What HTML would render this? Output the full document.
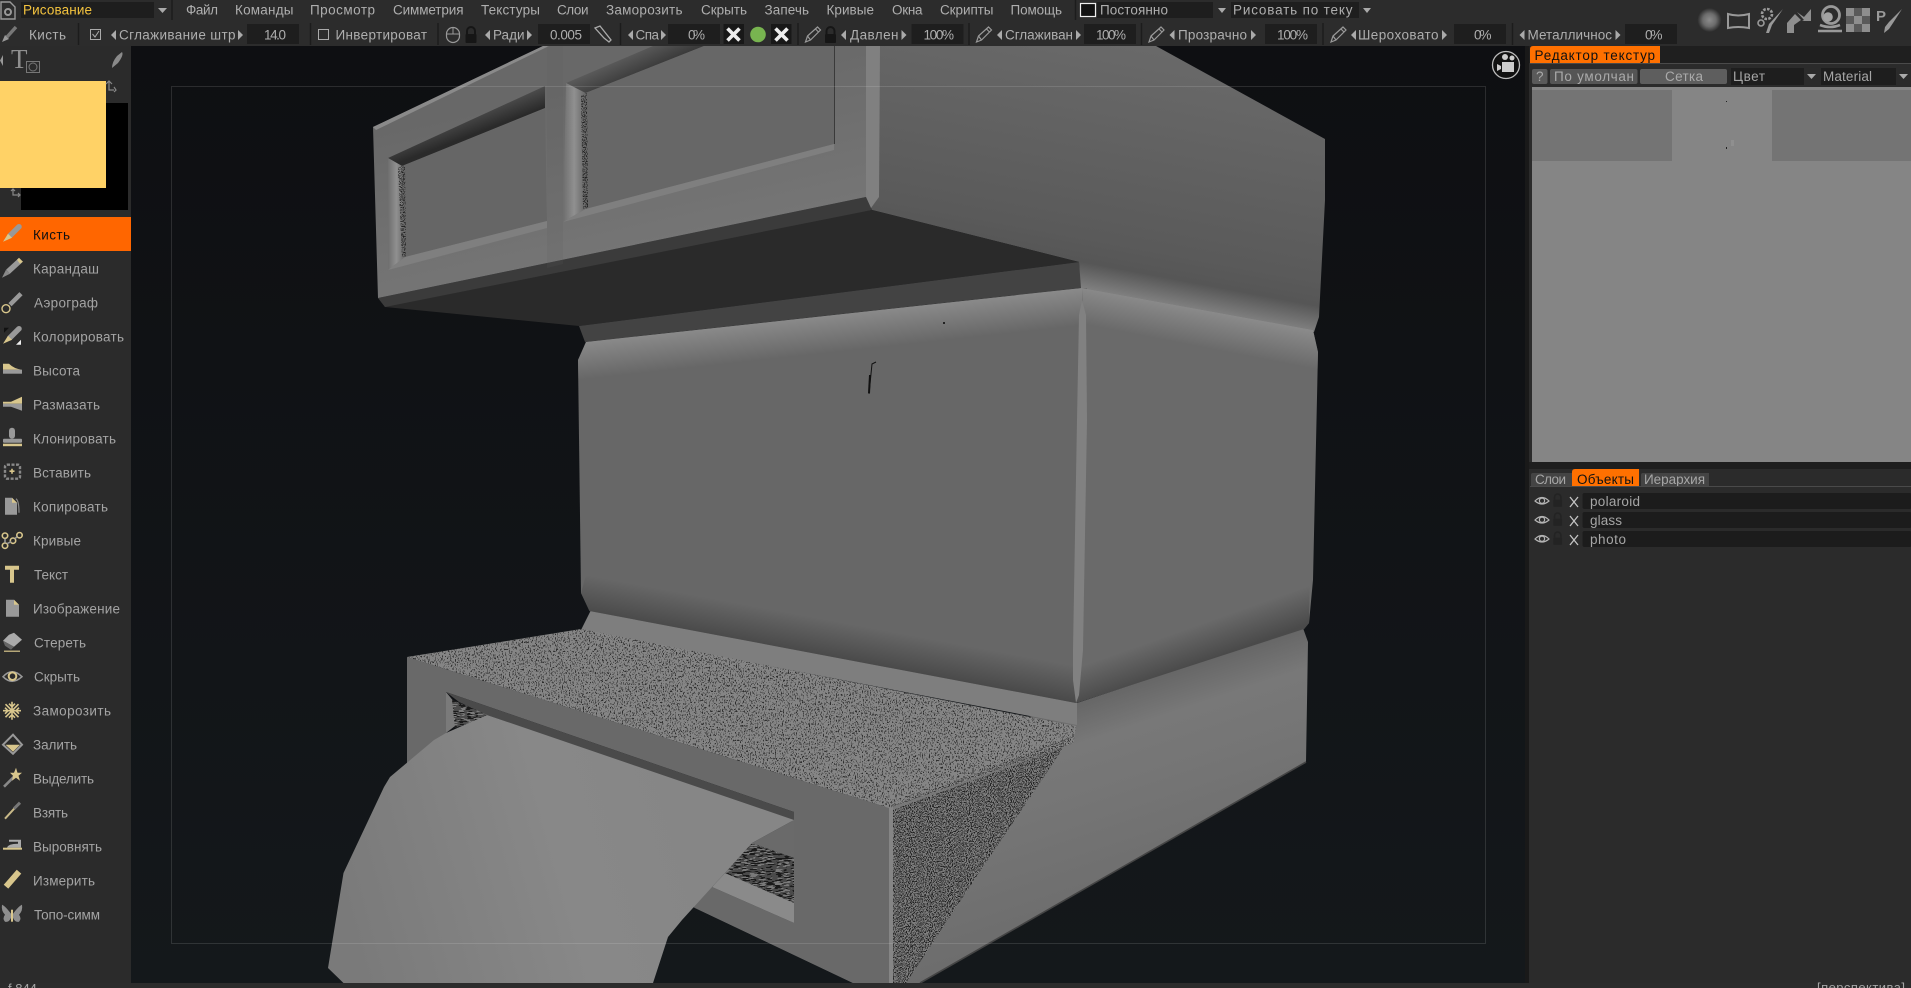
<!DOCTYPE html>
<html><head><meta charset="utf-8"><style>
html,body{margin:0;padding:0;background:#2c2c2c;overflow:hidden}
svg{display:block}
text{font-family:"Liberation Sans",sans-serif;font-size:13.5px;fill:#a6a6a6}
.m{fill:#aeaeae}
.s{fill:#a4a4a4;font-size:13.5px}
.f{fill:#1e1e1e}
.sep{stroke:#1c1c1c;stroke-width:1.5}
</style></head><body>
<svg width="1911" height="988" viewBox="0 0 1911 988" xmlns="http://www.w3.org/2000/svg">
<defs>
<linearGradient id="vp" x1="0" y1="0" x2="0" y2="1"><stop offset="0" stop-color="#0e0f12"/><stop offset="1" stop-color="#14181b"/></linearGradient>
<linearGradient id="rf" gradientUnits="userSpaceOnUse" x1="1245" y1="54" x2="1197" y2="310"><stop offset="0" stop-color="#6a6a6a"/><stop offset=".8" stop-color="#5a5a5a"/><stop offset=".9" stop-color="#565656"/><stop offset="1" stop-color="#808080"/></linearGradient>
<linearGradient id="lf" gradientUnits="userSpaceOnUse" x1="600" y1="80" x2="640" y2="260"><stop offset="0" stop-color="#686868"/><stop offset="1" stop-color="#767676"/></linearGradient>
<linearGradient id="bev" gradientUnits="userSpaceOnUse" x1="458" y1="92" x2="474" y2="134"><stop offset="0" stop-color="#6a6a6a"/><stop offset=".45" stop-color="#555"/><stop offset="1" stop-color="#2a2a2a"/></linearGradient>
<linearGradient id="bev2" gradientUnits="userSpaceOnUse" x1="625" y1="52" x2="640" y2="85"><stop offset="0" stop-color="#606060"/><stop offset="1" stop-color="#2c2c2c"/></linearGradient>
<linearGradient id="mt" gradientUnits="userSpaceOnUse" x1="832" y1="315" x2="836" y2="352"><stop offset="0" stop-color="#8a8a8a"/><stop offset="1" stop-color="#8a8a8a" stop-opacity="0"/></linearGradient>
<linearGradient id="mb" gradientUnits="userSpaceOnUse" x1="832" y1="657" x2="838.5" y2="622"><stop offset="0" stop-color="#4a4a4a"/><stop offset="1" stop-color="#4a4a4a" stop-opacity="0"/></linearGradient>
<linearGradient id="rt" gradientUnits="userSpaceOnUse" x1="1197" y1="309" x2="1190" y2="345"><stop offset="0" stop-color="#8a8a8a"/><stop offset="1" stop-color="#8a8a8a" stop-opacity="0"/></linearGradient>
<linearGradient id="rb" gradientUnits="userSpaceOnUse" x1="1190" y1="666" x2="1178" y2="632"><stop offset="0" stop-color="#4a4a4a"/><stop offset="1" stop-color="#4a4a4a" stop-opacity="0"/></linearGradient>
<linearGradient id="lb" gradientUnits="userSpaceOnUse" x1="1190" y1="665" x2="1269" y2="902"><stop offset="0" stop-color="#666"/><stop offset=".16" stop-color="#787878"/><stop offset=".38" stop-color="#757575"/><stop offset="1" stop-color="#6a6a6a"/></linearGradient>
<linearGradient id="pp" gradientUnits="userSpaceOnUse" x1="340" y1="900" x2="700" y2="800"><stop offset="0" stop-color="#7a7a7a"/><stop offset=".6" stop-color="#888"/><stop offset="1" stop-color="#868686"/></linearGradient>
<linearGradient id="fl" x1="0" y1="0" x2="1" y2="0"><stop offset="0" stop-color="#6e6e6e"/><stop offset=".5" stop-color="#909090"/><stop offset="1" stop-color="#666"/></linearGradient>
<radialGradient id="ball"><stop offset="0" stop-color="#8c8c8c"/><stop offset=".55" stop-color="#6c6c6c"/><stop offset="1" stop-color="#2c2c2c"/></radialGradient>
<filter id="n1" x="0" y="0" width="1" height="1" color-interpolation-filters="sRGB"><feTurbulence type="fractalNoise" baseFrequency="0.85 0.55" numOctaves="2" seed="4"/><feColorMatrix values="0 0 0 0 .18 0 0 0 0 .18 0 0 0 0 .18 22 0 0 0 -12.9"/><feComposite in2="SourceAlpha" operator="in"/></filter>
<filter id="n2" x="0" y="0" width="1" height="1" color-interpolation-filters="sRGB"><feTurbulence type="fractalNoise" baseFrequency="0.95 0.8" numOctaves="2" seed="9"/><feColorMatrix values="0 0 0 0 .13 0 0 0 0 .13 0 0 0 0 .13 22 0 0 0 -11.4"/><feComposite in2="SourceAlpha" operator="in"/></filter>
<filter id="n3" x="0" y="0" width="1" height="1" color-interpolation-filters="sRGB"><feTurbulence type="fractalNoise" baseFrequency="0.12 1" numOctaves="2" seed="2"/><feColorMatrix values="0 0 0 0 .1 0 0 0 0 .1 0 0 0 0 .1 22 0 0 0 -10.4"/><feComposite in2="SourceAlpha" operator="in"/></filter>
<g id="tl"><path d="M3-5V5L-2 0Z" fill="#aaa"/></g>
<g id="tr"><path d="M-2-5V5L3 0Z" fill="#aaa"/></g>
<g id="pen"><path d="M1 15L3 9 13 0 16 3 6 13Z M3 9L6 13 M11 2L14 5" fill="none" stroke="#999" stroke-width="1.2"/></g>
<g id="lock"><path d="M2.5 7V4a4 4 0 0 1 8 0V7" fill="none" stroke="#161616" stroke-width="2"/><rect x="1" y="7" width="11" height="9" rx="1" fill="#161616"/></g>
<g id="lock2"><path d="M2.5 7V4a4 4 0 0 1 8 0V7" fill="none" stroke="#232323" stroke-width="2"/><rect x="1" y="7" width="11" height="9" rx="1" fill="#232323"/></g>
<g id="eye"><path d="M0 5Q7-2 14 5Q7 11 0 5Z" fill="none" stroke="#b4b4b4" stroke-width="1.2"/><circle cx="7" cy="4.7" r="2.6" fill="none" stroke="#b4b4b4" stroke-width="1.2"/></g>
<path id="xx" d="M-6-6L6 6M6-6L-6 6" stroke="#eee" stroke-width="3.6" fill="none"/>
</defs>

<rect width="1911" height="988" fill="#2c2c2c"/>
<!-- viewport -->
<rect x="131" y="46" width="1394" height="937" fill="url(#vp)"/>
<rect x="1525" y="46" width="5" height="937" fill="#191919"/>

<!-- upper box right face -->
<polygon points="879,46 1156,46 1325,139 1325,200 1319,317 1314,332 1080,288 1079,262 872,210 866,197" fill="url(#rf)"/>
<!-- underside -->
<polygon points="872,210 1079,262 579,326 385,307 378,298" fill="#2a2a2a"/>
<polygon points="1079,262 1081,288 585,342 579,326" fill="#434343"/>
<polygon points="378,298 866,197 872,210 385,307" fill="#3b3b3b"/>
<!-- upper box left face -->
<polygon points="543,46 879,46 879,197 866,197 378,298 373,127" fill="url(#lf)"/>
<polygon points="866,46 880,46 879,197 871,208 866,197" fill="#808080"/>
<polygon points="373,127 543,46 549,46 376,130" fill="#8a8a8a"/>
<polygon points="547,46 563,46 563,264 547,268" fill="#5f5f5f" opacity=".16"/>
<!-- panel 1 -->
<polygon points="388,158 545,86 545,108 402,166" fill="url(#bev)"/>
<polygon points="402,166 545,109 547,221 405,257" fill="#666"/>
<polygon points="388,158 402,166 405,257 388,270" fill="url(#fl)"/>
<polygon points="398,168 405,165 406,257 402,257" fill="#000" filter="url(#n2)"/>
<polygon points="405,257 547,221 547,228 388,270" fill="#7f7f7f"/>
<!-- panel 2 -->
<polygon points="566,83 653,46 704,46 585.5,93" fill="url(#bev2)"/>
<polygon points="585.5,93 704,46 834,46 834,144 585.5,209" fill="#676767"/>
<polygon points="566,83 585.5,93 585.5,209 563,222" fill="url(#fl)"/>
<polygon points="581,96 587,93 588,208 583,209" fill="#000" filter="url(#n2)"/>
<polygon points="585.5,209 834,144 834,150 563,222" fill="#7f7f7f"/>
<line x1="834.5" y1="46" x2="834.5" y2="144" stroke="#3a3a3a" stroke-width="1"/>
<!-- lower base right face -->
<polygon points="1077,703 1303,628 1308,642 1306,762 920,983 889,983 880,760" fill="url(#lb)"/>
<line x1="1306" y1="762" x2="920" y2="983" stroke="#444" stroke-width="1.6"/>
<!-- noisy triangle -->
<polygon points="892,810 1064,747 983,867 906,983 889,983" fill="#7c7c7c"/>
<polygon points="892,810 1064,747 983,867 906,983 889,983" fill="#000" filter="url(#n2)"/>
<!-- ledge -->
<polygon points="591,610 1077,703 1077,725 581,630" fill="#7e7e7e"/>
<!-- frame -->
<polygon points="407,657 889,808 889,983 853,983 695,908 407,770" fill="#696969"/>
<polygon points="889,808 893,806 893,983 889,983" fill="#858585"/>
<!-- hole -->
<polygon points="446,692 794,812 794,923 712,887 446,740" fill="#101215"/>
<polygon points="446,692 455,703 455,726 446,733" fill="#7a7a7a"/>
<polygon points="452,700 490,715 455,728" fill="#7c7c7c"/>
<polygon points="452,700 490,715 455,728" fill="#000" filter="url(#n3)"/>
<polygon points="446,692 794,812 794,822 487,715 459,702" fill="#4a4a4a"/>
<polygon points="794,820 752,843 794,858" fill="#6a6a6a"/>
<polygon points="752,843 794,858 794,903 725,873" fill="#7a7a7a"/>
<polygon points="752,843 794,858 794,903 725,873" fill="#000" filter="url(#n3)"/>
<polygon points="712,887 725,873 794,903 794,923" fill="#8a8a8a"/>
<polygon points="695,908 712,887 794,923 794,955" fill="#696969"/>
<polygon points="794,815 854,815 854,983 853,983 794,955" fill="#696969"/>
<!-- paper -->
<polygon points="446,733 487,715 794,820 752,843 725,873 712,887 682,920 668,937 653,983 343.5,983 328,968 343.5,873 384,787 390,777 434,740" fill="url(#pp)"/>
<!-- shelf -->
<polygon points="407,657 581,629 1076,726 1073.6,743 889,808" fill="#858585"/>
<polygon points="407,657 581,629 1076,726 1073.6,743 889,808" fill="#000" filter="url(#n1)"/>
<polygon points="407,657 889,808 905,800 1070,737 1073.6,743 889,808" fill="#858585"/>
<polygon points="407,657 889,808 905,800 1070,737 1073.6,743 889,808" fill="#000" filter="url(#n2)" opacity=".8"/>
<!-- middle box left -->
<polygon points="586,342 1082,288 1087,288 1087,500 1076,703 589.5,611 581,593 578,360" fill="#676767"/>
<polygon points="586,342 1082,288 1084,352 578,400 578,360" fill="url(#mt)"/>
<polygon points="581,593 589.5,611 1076,703 1082,640 590,560" fill="url(#mb)"/>
<!-- middle box right -->
<polygon points="1082,288 1313,330 1318,352 1313,580 1309,623 1304,629 1076,703 1082,500" fill="#6a6a6a"/>
<polygon points="1082,288 1313,330 1318,352 1318,400 1085,360" fill="url(#rt)"/>
<polygon points="1076,703 1304,629 1309,623 1310,570 1080,640" fill="url(#rb)"/>
<!-- ridge -->
<polygon points="1082,300 1086,315 1087,420 1083,650 1079,695 1076,703 1073,680 1073,650 1077,420 1079,315" fill="#818181"/>
<!-- scratches -->
<path d="M869 394L872 364 876 362" stroke="#111" stroke-width="1" fill="none"/><path d="M870 375L869 393" stroke="#111" stroke-width="2" fill="none"/>
<rect x="943" y="322" width="2" height="2" fill="#222"/>
<!-- frame lines -->
<rect x="171.5" y="86.5" width="1314" height="857" fill="none" stroke="#fff" stroke-opacity=".12" stroke-width="1"/>
<!-- camera -->
<circle cx="1506" cy="65" r="13.5" fill="#111" stroke="#bbb" stroke-width="1.3"/>
<circle cx="1505" cy="57" r="3" fill="#ccc"/><circle cx="1512" cy="58" r="2.5" fill="#ccc"/>
<rect x="1502" y="62" width="12" height="10" fill="#ccc"/><path d="M1497 64l4 2v3l-4 2z" fill="#ccc"/>

<!-- top bars -->
<rect x="0" y="0" width="1911" height="46" fill="#2c2c2c"/>
<!-- row 1 -->
<path d="M1 2H10L15 7V19H1Z" fill="none" stroke="#9a9a9a" stroke-width="1.4"/><circle cx="8" cy="12" r="3" fill="none" stroke="#999" stroke-width="2"/>
<rect x="21" y="2" width="133" height="16" class="f"/>
<text x="23" y="14.5" textLength="69" style="fill:#f2c23e">Рисование</text>
<path d="M158 8h9l-4.5 5z" fill="#aaa"/>
<line x1="172" y1="0" x2="172" y2="20" class="sep"/>
<text class="m" x="186" y="14.5" textLength="32">Файл</text>
<text class="m" x="235" y="14.5" textLength="58.5">Команды</text>
<text class="m" x="310" y="14.5" textLength="65">Просмотр</text>
<text class="m" x="393" y="14.5" textLength="70.5">Симметрия</text>
<text class="m" x="481" y="14.5" textLength="59">Текстуры</text>
<text class="m" x="557" y="14.5" textLength="31.5">Слои</text>
<text class="m" x="606" y="14.5" textLength="76.5">Заморозить</text>
<text class="m" x="701" y="14.5" textLength="46">Скрыть</text>
<text class="m" x="764.5" y="14.5" textLength="44.5">Запечь</text>
<text class="m" x="826.5" y="14.5" textLength="47.5">Кривые</text>
<text class="m" x="892" y="14.5" textLength="30.5">Окна</text>
<text class="m" x="940" y="14.5" textLength="53.5">Скрипты</text>
<text class="m" x="1010.5" y="14.5" textLength="51.5">Помощь</text>
<line x1="1075.5" y1="0" x2="1075.5" y2="20" class="sep"/>
<rect x="1097" y="2" width="116" height="16" class="f"/>
<rect x="1080.5" y="3.5" width="15" height="13" fill="#111" stroke="#eee" stroke-width="1.2"/>
<text class="m" x="1100" y="14.5" textLength="68">Постоянно</text>
<path d="M1218 8h8l-4 5z" fill="#aaa"/>
<rect x="1231" y="2" width="128" height="16" class="f"/>
<text class="m" x="1233" y="14.5" textLength="119.5">Рисовать по теку</text>
<path d="M1363 8h8l-4 5z" fill="#aaa"/>
<!-- right icons -->
<circle cx="1709.5" cy="20" r="12" fill="url(#ball)"/>
<path d="M1728 14Q1738 17 1749 14V28Q1738 26 1728 28Z" fill="none" stroke="#999" stroke-width="2"/>
<circle cx="1767" cy="14" r="5" fill="none" stroke="#999" stroke-width="2.6" stroke-dasharray="2.6 1.3"/><circle cx="1761" cy="23" r="3" fill="none" stroke="#999" stroke-width="1.6"/><path d="M1783 9L1772 25 1769 33 1766 33 1769 24Z" fill="#999"/>
<path d="M1787 33V23L1795 14 1801 20 1794 25V33Z M1797 12L1804 17 1811 9V21H1802L1804 20Z" fill="#8e8e8e"/>
<circle cx="1831" cy="15" r="8.500" fill="none" stroke="#999" stroke-width="2.800"/><circle cx="1828" cy="17" r="4.800" fill="#a4a4a4"/><path d="M1820 25Q1830 29 1840 25M1818 31H1842" stroke="#999" stroke-width="2.600" fill="none"/>
<path d="M1846 8h8v8h-8zM1862 8h8v8h-8zM1854 16h8v8h-8zM1846 24h8v8h-8zM1862 24h8v8h-8z" fill="#8e8e8e"/><path d="M1854 8h8v8h-8zM1846 16h8v8h-8zM1862 16h8v8h-8zM1854 24h8v8h-8z" fill="#5a5a5a"/>
<text x="1876" y="21" style="font-size:15px;font-weight:bold;fill:#999">P</text><path d="M1902 9L1893 23 1889 29 1884 33 1885 27 1889 22Z" fill="#999"/>

<!-- row 2 -->
<line x1="16" y1="27" x2="7" y2="37" stroke="#777" stroke-width="3.4"/><path d="M5 35L9 39 2 42Z" fill="#999"/>
<text class="m" x="29" y="39.5" textLength="37">Кисть</text>
<line x1="78.5" y1="23" x2="78.5" y2="45" class="sep"/>
<rect x="90.5" y="29.5" width="10" height="10" fill="none" stroke="#aaa"/><path d="M92.5 34l2.5 3 4-6" stroke="#aaa" fill="none"/>
<use href="#tl" x="113" y="35"/>
<text class="m" x="119" y="39.5" textLength="116.5">Сглаживание штр</text>
<use href="#tr" x="240" y="35"/>
<rect x="247" y="24" width="52" height="20" class="f"/><text class="m" x="264" y="39.5" textLength="22">14.0</text>
<line x1="310.5" y1="23" x2="310.5" y2="45" class="sep"/>
<rect x="318.5" y="29.5" width="10" height="10" fill="none" stroke="#aaa"/>
<text class="m" x="335.5" y="39.5" textLength="91.5">Инвертироват</text>
<line x1="438" y1="23" x2="438" y2="45" class="sep"/>
<rect x="446.5" y="27.5" width="13" height="15" rx="6.5" fill="none" stroke="#999" stroke-width="1.2"/><path d="M453 28v6M447 34h12" stroke="#999"/>
<use href="#lock" x="464.5" y="27"/>
<use href="#tl" x="487" y="35"/>
<text class="m" x="493" y="39.5" textLength="31.5">Ради</text>
<use href="#tr" x="529" y="35"/>
<rect x="538" y="24" width="52" height="20" class="f"/><text class="m" x="550" y="39.5" textLength="32">0.005</text>
<path d="M595 28L600 26 611 40 609 42 604 38Z" fill="none" stroke="#aaa" stroke-width="1.3"/>
<line x1="620.5" y1="23" x2="620.5" y2="45" class="sep"/>
<use href="#tl" x="630" y="35"/>
<text class="m" x="635.5" y="39.5" textLength="23.5">Спа</text>
<use href="#tr" x="663" y="35"/>
<rect x="668" y="24" width="52" height="20" class="f"/><text class="m" x="688" y="39.5" textLength="17">0%</text>
<rect x="723.5" y="24" width="20.5" height="20" fill="#181818"/><use href="#xx" x="733.5" y="34.5"/>
<circle cx="758" cy="34.5" r="7.8" fill="#78b450"/>
<rect x="771" y="24" width="20.5" height="20" fill="#181818"/><use href="#xx" x="781.5" y="34.5"/>
<line x1="798" y1="23" x2="798" y2="45" class="sep"/>
<use href="#pen" x="804.5" y="27"/>
<use href="#lock" x="824" y="27"/>
<use href="#tl" x="843" y="35"/>
<text class="m" x="850" y="39.5" textLength="48.5">Давлен</text>
<use href="#tr" x="903.5" y="35"/>
<rect x="911.5" y="24" width="52" height="20" class="f"/><text class="m" x="923.5" y="39.5" textLength="30.5">100%</text>
<line x1="969" y1="23" x2="969" y2="45" class="sep"/>
<use href="#pen" x="975.5" y="27"/>
<use href="#tl" x="999" y="35"/>
<text class="m" x="1005" y="39.5" textLength="68">Сглаживан</text>
<use href="#tr" x="1078" y="35"/>
<rect x="1084" y="24" width="52" height="20" class="f"/><text class="m" x="1096" y="39.5" textLength="30">100%</text>
<line x1="1141.5" y1="23" x2="1141.5" y2="45" class="sep"/>
<use href="#pen" x="1148" y="27"/>
<use href="#tl" x="1171.5" y="35"/>
<text class="m" x="1178" y="39.5" textLength="69">Прозрачно</text>
<use href="#tr" x="1253" y="35"/>
<rect x="1265" y="24" width="52" height="20" class="f"/><text class="m" x="1277" y="39.5" textLength="31">100%</text>
<line x1="1323" y1="23" x2="1323" y2="45" class="sep"/>
<use href="#pen" x="1330" y="27"/>
<use href="#tl" x="1353" y="35"/>
<text class="m" x="1358" y="39.5" textLength="80.5">Шероховато</text>
<use href="#tr" x="1444" y="35"/>
<rect x="1454" y="24" width="52" height="20" class="f"/><text class="m" x="1474" y="39.5" textLength="17.5">0%</text>
<line x1="1512.5" y1="23" x2="1512.5" y2="45" class="sep"/>
<use href="#tl" x="1521.5" y="35"/>
<text class="m" x="1527.5" y="39.5" textLength="84.5">Металличнос</text>
<use href="#tr" x="1617.5" y="35"/>
<rect x="1625" y="24" width="52" height="20" class="f"/><text class="m" x="1645" y="39.5" textLength="17.5">0%</text>

<!-- sidebar -->
<rect x="0" y="46" width="131" height="937" fill="#2b2b2b"/>
<path d="M3 55V66L0 60.5Z" fill="#999"/>
<text x="11" y="68" style="font-family:'Liberation Serif',serif;font-size:27px;fill:#8f8f8f">T</text>
<rect x="26.5" y="61.5" width="13" height="11" fill="none" stroke="#777"/><circle cx="33" cy="67" r="4" fill="none" stroke="#777"/>
<path d="M122 52Q124 55 118 63L112 68Q112 62 117 56Z" fill="#8a8a8a"/>
<rect x="21" y="103" width="107" height="107" fill="#000"/>
<rect x="0" y="81" width="106" height="107" fill="#ffd266"/>
<path d="M109 82v8h5M106 84l3-3 3 3M114 87l2 3-2 2" fill="none" stroke="#888" stroke-width="1.2"/>
<path d="M13 189v6h6M11 191l2-2 2 2M18 193l2 2-2 2" fill="none" stroke="#888" stroke-width="1.2"/>
<rect x="0" y="217" width="131" height="34" fill="#ff6600"/>

<text class="s" style="fill:#111" x="33" y="239.5" textLength="37">Кисть</text>
<text class="s" x="33" y="273.5" textLength="66">Карандаш</text>
<text class="s" x="34" y="307.5" textLength="64">Аэрограф</text>
<text class="s" x="33" y="341.5" textLength="91">Колорировать</text>
<text class="s" x="33" y="375.5" textLength="47">Высота</text>
<text class="s" x="33" y="409.5" textLength="67">Размазать</text>
<text class="s" x="33" y="443.5" textLength="83">Клонировать</text>
<text class="s" x="33" y="477.5" textLength="58">Вставить</text>
<text class="s" x="33" y="511.5" textLength="75">Копировать</text>
<text class="s" x="33" y="545.5" textLength="48">Кривые</text>
<text class="s" x="34" y="579.5" textLength="34">Текст</text>
<text class="s" x="33" y="613.5" textLength="87">Изображение</text>
<text class="s" x="34" y="647.5" textLength="52">Стереть</text>
<text class="s" x="34" y="681.5" textLength="46">Скрыть</text>
<text class="s" x="33" y="715.5" textLength="78">Заморозить</text>
<text class="s" x="33" y="749.5" textLength="44">Залить</text>
<text class="s" x="33" y="783.5" textLength="61">Выделить</text>
<text class="s" x="33" y="817.5" textLength="35">Взять</text>
<text class="s" x="33" y="851.5" textLength="69">Выровнять</text>
<text class="s" x="33" y="885.5" textLength="62">Измерить</text>
<text class="s" x="34" y="919.5" textLength="66">Топо-симм</text>

<!-- sidebar icons -->
<g transform="translate(0,234.7)"><line x1="19" y1="-8" x2="10" y2="1" stroke="#999" stroke-width="5.5" stroke-linecap="round"/><path d="M8-1L12 3 3 7Z" fill="#d8c68c"/></g>
<g transform="translate(0,268.7)"><line x1="20" y1="-8" x2="8" y2="3" stroke="#999" stroke-width="5.5"/><path d="M19-11L23-7 20-5 17-9Z" fill="#d8c68c"/><path d="M6 1L10 5 2 9Z" fill="#888"/></g>
<g transform="translate(0,302.7)"><circle cx="6" cy="6" r="4" fill="none" stroke="#d8c68c" stroke-width="1.4"/><line x1="21" y1="-9" x2="10" y2="2" stroke="#999" stroke-width="4.500"/></g>
<g transform="translate(0,336.7)"><path d="M4-9H9L4-4Z" fill="#111"/><path d="M21 3V8H16Z" fill="#eee"/><line x1="19" y1="-8" x2="10" y2="1" stroke="#999" stroke-width="5.5" stroke-linecap="round"/><path d="M8-1L12 3 3 7Z" fill="#d8c68c"/></g>
<g transform="translate(0,370.7)"><path d="M3-7H9Q14-2 22-1H3Z" fill="#d8c68c"/><rect x="3" y="-1" width="19" height="4" fill="#999"/></g>
<g transform="translate(0,404.7)"><path d="M3-3H11L22-8V-1H3Z" fill="#d8c68c"/><path d="M3-1H22V6L11 2H3Z" fill="#999"/></g>
<g transform="translate(0,438.7)"><rect x="9" y="-11" width="6" height="11" rx="3" fill="#999"/><rect x="3" y="0" width="19" height="4" rx="1" fill="#999"/><rect x="3" y="5" width="19" height="2.5" fill="#d8c68c"/></g>
<g transform="translate(0,472.7)"><rect x="5" y="-8" width="15" height="14" rx="2" fill="none" stroke="#888" stroke-width="2.4" stroke-dasharray="3 1.5"/><path d="M12-4v5M9.5-1.500h5" stroke="#d8c68c" stroke-width="1.6"/></g>
<g transform="translate(0,506.7)"><path d="M16-8Q19-6 19 6" fill="none" stroke="#888" stroke-width="1.2"/><path d="M5-9H12L17-4V8H5Z" fill="#999"/><path d="M12-9L17-4H12Z" fill="#d8c68c"/></g>
<g transform="translate(0,540.7)" fill="none" stroke="#d8c68c" stroke-width="1.6"><circle cx="5" cy="-5" r="2.7"/><circle cx="5" cy="5" r="2.7"/><circle cx="13" cy="0" r="2.7"/><circle cx="19.500" cy="-5.500" r="2.7"/><path d="M5-2V2M7 3L11 1M15-2L17-4" stroke="#999"/></g>
<g transform="translate(0,574.7)"><path d="M5-9H19V-5H14V8H10V-5H5Z" fill="#d8c68c"/></g>
<g transform="translate(0,608.7)"><path d="M6-9H14L19-4V8H6Z" fill="#999"/><path d="M14-9L19-4H14Z" fill="#d8c68c"/></g>
<g transform="translate(0,642.7)"><path d="M14-10L22-3 14 4 3-2 9-8Z" fill="#aaa"/><path d="M3-2L14 4 11 7 5 3Z" fill="#666"/><line x1="4" y1="8.500" x2="20" y2="8.500" stroke="#d8c68c" stroke-width="1.2"/></g>
<g transform="translate(0,676.7)"><path d="M3 0Q12-10 22 0Q12 9 3 0Z" fill="none" stroke="#999" stroke-width="1.500"/><circle cx="12.500" cy="-.5" r="3.800" fill="none" stroke="#d8c68c" stroke-width="2"/></g>
<g transform="translate(12,710.700)" stroke="#d8c68c" stroke-width="2.400"><path d="M-9 0H9M0-9V9M-6.500-6.500L6.500 6.500M6.500-6.500L-6.500 6.500M-7-3L-4 0-7 3M7-3L4 0 7 3M-3-7L0-4 3-7M-3 7L0 4 3 7" fill="none" stroke-width="1.600"/></g>
<g transform="translate(0,744.7)"><path d="M13-10L22 0 13 9 3 0Z" fill="none" stroke="#999" stroke-width="2"/><path d="M5.500 0H20L13 7Z" fill="#d8c68c"/></g>
<g transform="translate(0,778.7)"><line x1="15" y1="-3" x2="4" y2="8" stroke="#888" stroke-width="2.600"/><path d="M16-11L17.500-6 22-6 18.500-3 20 2 16-1 12 2 13-3 10-6 14-6Z" fill="#d8c68c"/></g>
<g transform="translate(0,812.7)"><line x1="16" y1="-6" x2="5" y2="6" stroke="#c8b988" stroke-width="2"/><line x1="20" y1="-10" x2="14" y2="-4" stroke="#777" stroke-width="3"/></g>
<g transform="translate(0,846.7)"><path d="M9-7H21V1H7Q8-3 18-3V-5H9Z" fill="#aaa"/><rect x="3" y="1" width="19" height="2" fill="#d8c68c"/></g>
<g transform="translate(0,880.7)"><line x1="19" y1="-9" x2="6" y2="6" stroke="#d8c68c" stroke-width="6"/></g>
<g transform="translate(0,914.7)"><path d="M11-1Q5-9 2-10Q1-4 5 0Q2 4 5 7Q9 8 11 3Z M13-1Q19-9 22-10Q23-4 19 0Q22 4 19 7Q15 8 13 3Z" fill="#8e8e8e"/><rect x="11" y="-5" width="2" height="12" fill="#d8c68c"/></g>

<!-- right panel -->
<rect x="1529" y="46" width="382" height="937" fill="#2b2b2b"/>
<rect x="1529" y="46" width="382" height="17" fill="#1f1f1f"/>
<path d="M1530 63V49Q1530 46 1533 46H1660V63Z" fill="#ff7000"/>
<text x="1534.5" y="60" textLength="120.500" style="fill:#111">Редактор текстур</text>
<line x1="1530" y1="63.500" x2="1911" y2="63.500" stroke="#4a4a4a"/>
<rect x="1532" y="69" width="15.500" height="15" rx="2" fill="#5a5a5a"/><text x="1536" y="81" style="fill:#aaa">?</text>
<rect x="1550" y="69" width="87.500" height="15" rx="2" fill="#555"/><text x="1554" y="81" textLength="80" style="fill:#aaa">По умолчан</text>
<rect x="1640" y="69" width="87" height="15" rx="2" fill="#5e5e5e"/><text x="1665" y="81" textLength="38" style="fill:#aaa">Сетка</text>
<rect x="1731" y="68" width="73" height="17" class="f"/><text x="1733" y="81" textLength="32">Цвет</text>
<path d="M1807 74h9l-4.500 5z" fill="#aaa"/>
<rect x="1821" y="68" width="75" height="17" class="f"/><text x="1823" y="81" textLength="49">Material</text>
<path d="M1899 74h9l-4.500 5z" fill="#aaa"/>
<rect x="1532" y="87" width="379" height="375" fill="#858585"/>
<rect x="1532" y="90" width="140" height="71" fill="#747474"/>
<rect x="1772" y="90" width="139" height="71" fill="#747474"/>
<rect x="1726" y="101" width="1" height="1" fill="#222"/><rect x="1726" y="147" width="1" height="2" fill="#222"/><rect x="1731" y="140" width="3" height="6" fill="#8f8f8f"/>
<rect x="1529" y="462" width="382" height="7" fill="#1e1e1e"/>
<path d="M1531 486V475Q1531 473 1533 473H1572V486Z" fill="#444"/>
<text x="1535" y="484" textLength="31">Слои</text>
<path d="M1572 486V472Q1572 469 1575 469H1639V486Z" fill="#ff7000"/>
<text x="1577" y="484" textLength="57" style="fill:#111">Объекты</text>
<path d="M1641 486V475Q1641 473 1643 473H1709V486Z" fill="#444"/>
<text x="1644" y="484" textLength="61">Иерархия</text>
<line x1="1530" y1="486.500" x2="1911" y2="486.500" stroke="#4a4a4a"/>
<rect x="1582.500" y="493" width="329" height="16" rx="2" fill="#1c1c1c"/>
<rect x="1582.500" y="512" width="329" height="16" rx="2" fill="#1c1c1c"/>
<rect x="1582.500" y="531" width="329" height="16" rx="2" fill="#1c1c1c"/>
<text x="1590" y="506" textLength="50">polaroid</text>
<text x="1590" y="525" textLength="32">glass</text>
<text x="1590" y="544" textLength="36">photo</text>
<use href="#eye" x="1535" y="496"/><use href="#eye" x="1535" y="515"/><use href="#eye" x="1535" y="534"/>
<g transform="translate(1552.500,494) scale(.8)"><use href="#lock2"/></g>
<g transform="translate(1552.500,513) scale(.8)"><use href="#lock2"/></g>
<g transform="translate(1552.500,532) scale(.8)"><use href="#lock2"/></g>
<path d="M1570 497L1578 507M1578 497L1570 507M1570 516L1578 526M1578 516L1570 526M1570 535L1578 545M1578 535L1570 545" stroke="#c4c4c4" stroke-width="1.300"/>

<!-- bottom strip -->
<rect x="0" y="983" width="1911" height="5" fill="#2c2c2c"/>
<text x="8" y="993" style="font-size:13px">f 844</text>
<text x="1817" y="992" textLength="88" style="font-size:13px">[перспектива]</text>
</svg>
</body></html>
